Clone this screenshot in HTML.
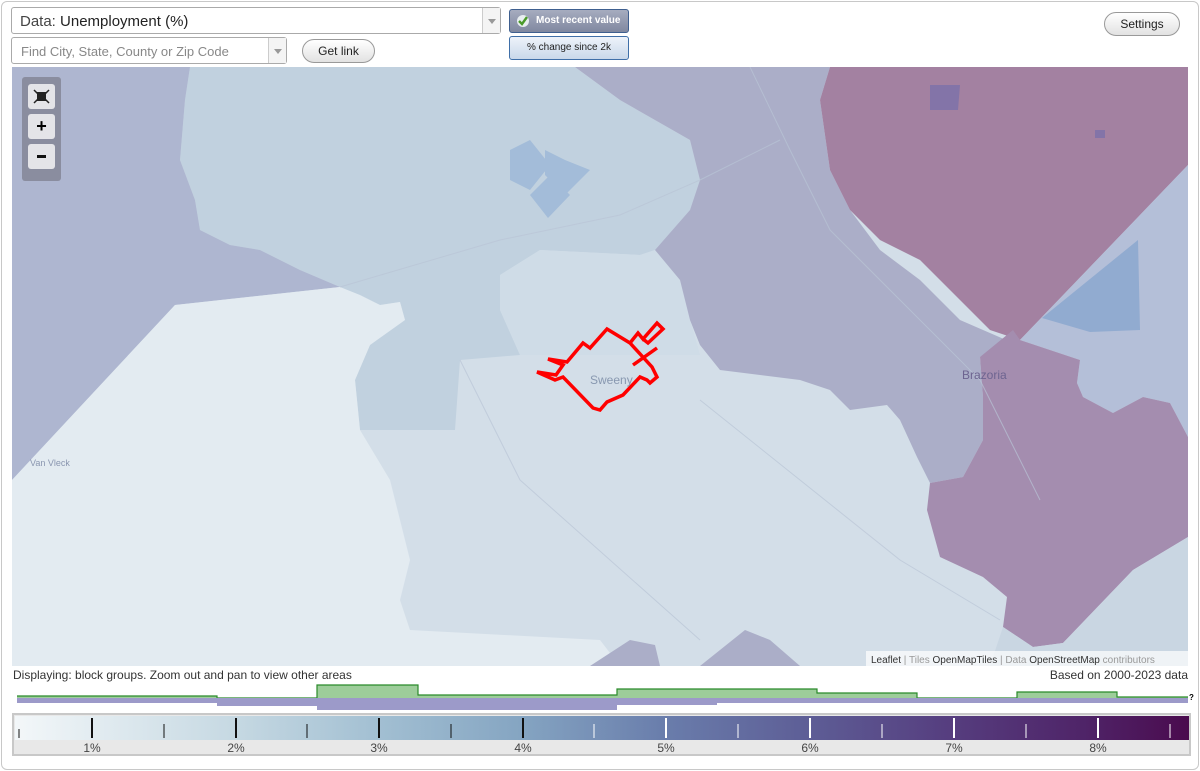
<!DOCTYPE html>
<html><head><meta charset="utf-8"><style>
*{box-sizing:border-box}
body{margin:0;width:1200px;height:771px;background:#fff;font-family:"Liberation Sans",sans-serif;position:relative;overflow:hidden}
.frame{position:absolute;left:1px;top:1px;width:1198px;height:769px;border:1px solid #c8c8c8;border-radius:6px}
.sel{position:absolute;background:#fff;border:1px solid #aaa;border-radius:3px;color:#444}
.arrow{position:absolute;right:0;top:0;bottom:0;width:18px;border-left:1px solid #ccc;background:#f4f4f4}
.arrow:after{content:"";position:absolute;left:5px;top:11px;border:4px solid transparent;border-top:5px solid #999}
.btn{position:absolute;border:1px solid #999;border-radius:12px;background:linear-gradient(#fff,#e2e2e2);font-size:12px;text-align:center;color:#222}
</style></head><body>
<div class="frame"></div>
<div class="sel" style="left:11px;top:7px;width:490px;height:27px;font-size:15px;padding:5px 8px">Data: <span style="color:#222">Unemployment (%)</span><div class="arrow" style="height:25px"></div></div>
<div class="sel" style="left:11px;top:37px;width:276px;height:27px;font-size:13px;padding:6px 9px;color:#888">Find City, State, County or Zip Code<div class="arrow" style="height:25px"></div></div>
<div class="btn" style="left:302px;top:39px;width:73px;height:24px;line-height:22px">Get link</div>
<div style="position:absolute;left:509px;top:9px;width:120px;height:24px;border:1px solid #3f5f8f;border-radius:3px;background:linear-gradient(#a6acbf,#8088a0);color:#fff;font-size:10px;font-weight:bold;line-height:22px;padding-left:26px">Most recent value
<svg style="position:absolute;left:6px;top:4px" width="14" height="14" viewBox="0 0 14 14"><circle cx="7" cy="7" r="6" fill="#e8eef0"/><path d="M3 7l3 3 5-7" stroke="#4a9a2a" stroke-width="2.4" fill="none"/></svg></div>
<div style="position:absolute;left:509px;top:36px;width:120px;height:24px;border:1px solid #3f6fa8;border-radius:3px;background:linear-gradient(#eef3fa,#c9d8ea);color:#222;font-size:10px;line-height:22px;text-align:center">% change since 2k</div>
<div class="btn" style="left:1104px;top:12px;width:76px;height:24px;line-height:22px">Settings</div>

<svg style="position:absolute;left:12px;top:67px" width="1176" height="599" viewBox="12 67 1176 599">
<rect x="12" y="67" width="1176" height="599" fill="#d3dee8"/>
<path d="M190 67L575 67 620 100 690 140 700 180 690 210 655 250 640 255 540 250 500 275 500 310 520 355 460 360 455 430 360 430 355 380 370 345 405 320 400 302 380 305 340 287 300 270 260 250 230 245 200 230 195 200 180 160 185 100Z" fill="#c1d1df"/>
<path d="M500 275L540 250 640 255 655 250 680 280 690 320 700 355 520 355 500 310Z" fill="#cfdce7"/>
<path d="M12 67L190 67 185 100 180 160 195 200 200 230 230 245 260 250 300 270 340 287 175 305 12 480Z" fill="#aeb6d0"/>
<path d="M175 305L340 287 360 295 380 305 400 302 405 320 370 345 355 380 360 430 390 480 400 520 410 560 400 600 410 630 600 640 620 666 12 666 12 480Z" fill="#e3ebf1"/>
<path d="M575 67L830 67 820 100 830 170 850 210 880 250 920 280 960 320 1013 343 980 357 983 397 983 440 963 477 930 483 917 457 900 420 887 405 850 410 830 390 800 380 720 370 700 345 690 320 680 280 655 250 690 210 700 180 690 140 620 100Z" fill="#abaec8"/>
<path d="M830 67L1188 67 1188 165 1020 340 990 330 960 300 920 260 880 240 850 210 830 170 820 100Z" fill="#a381a1"/>
<path d="M1188 165L1188 437 1170 403 1143 397 1113 413 1083 397 1077 383 1080 360 1020 340Z" fill="#b4bfd8"/>
<path d="M1042 318L1138 240 1140 330 1090 332Z" fill="#91abd0"/>
<path d="M1013 330L1020 340 1080 360 1077 383 1083 397 1113 413 1143 397 1170 403 1188 437 1188 537 1133 570 1063 643 1033 647 1003 627 1007 597 983 577 940 557 927 510 930 483 963 477 983 440 983 397 980 357Z" fill="#a48daf"/>
<path d="M1188 537L1188 666 990 666 1003 627 1033 647 1063 643 1133 570Z" fill="#c9d6e2"/>
<path d="M590 666L630 640 655 645 660 666Z" fill="#abaec8"/>
<path d="M700 666L745 630 770 640 800 666Z" fill="#abaec8"/>
<path d="M510 150L530 140 550 165 530 190 510 180Z M545 150L565 160 590 170 565 195 545 175Z M530 195L550 175 570 195 548 218Z" fill="#a3bcd9"/>
<path d="M930 85L960 85 958 110 930 110Z M1095 130L1105 130 1105 138 1095 138Z" fill="#8374a8"/>
<g fill="none" stroke="#b9c5d6" stroke-width="1" opacity=".7"><path d="M340 287L500 240 620 215 700 180 780 140"/><path d="M750 67L790 150 830 230 900 300 980 380 1040 500"/><path d="M460 360L520 480 700 640"/><path d="M700 400L900 560 1000 620"/></g>
<path d="M548 359L563 365 556 375 537 372 555 380 563 377 593 408 600 410 607 402 623 395 640 377 647 380 650 383 657 377 652 367 630 343 607 329 590 348 583 343 567 362 548 359Z M630 343L638 333 643 339 657 323 663 329 648 343 643 339 M633 365L657 348" fill="none" stroke="#f00" stroke-width="3.5" stroke-linejoin="miter"/>
<text x="590" y="384" font-size="12" fill="#8898b0" font-family="Liberation Sans,sans-serif">Sweeny</text>
<text x="962" y="379" font-size="12" fill="#6d6490" font-family="Liberation Sans,sans-serif">Brazoria</text>
<text x="30" y="466" font-size="9" fill="#8a96b0" font-family="Liberation Sans,sans-serif">Van Vleck</text>
<rect x="866" y="651" width="322" height="15" fill="rgba(255,255,255,.7)"/>
<text x="871" y="663" font-size="10" fill="#333" font-family="Liberation Sans,sans-serif"><tspan>Leaflet</tspan><tspan fill="#999"> | Tiles </tspan><tspan>OpenMapTiles</tspan><tspan fill="#999"> | Data </tspan><tspan>OpenStreetMap</tspan><tspan fill="#999"> contributors</tspan></text>
</svg>
<div style="position:absolute;left:22px;top:77px;width:39px;height:104px;background:#8a8d9f;border-radius:3px"></div>
<div style="position:absolute;left:28px;top:84px;width:27px;height:25px;background:#e4e4e8;border-radius:3px"><svg width="27" height="25"><rect x="9" y="8" width="9" height="9" fill="#222"/><path d="M6 6l4 4M21 6l-4 4M6 19l4-4M21 19l-4-4" stroke="#222" stroke-width="1.5"/></svg></div>
<div style="position:absolute;left:28px;top:114px;width:27px;height:25px;background:#e4e4e8;border-radius:3px;font:bold 18px 'Liberation Sans';text-align:center;line-height:25px">+</div>
<div style="position:absolute;left:28px;top:144px;width:27px;height:25px;background:#e4e4e8;border-radius:3px"><div style="position:absolute;left:9px;top:11px;width:9px;height:3px;background:#111"></div></div>

<div style="position:absolute;left:13px;top:668px;font-size:12px;color:#333">Displaying: block groups. Zoom out and pan to view other areas</div>
<div style="position:absolute;right:12px;top:668px;font-size:12px;color:#333">Based on 2000-2023 data</div>
<svg style="position:absolute;left:0;top:680px" width="1200" height="32">
<path d="M17 16H217V18H317V5H418V15H617V9H817V13H917V18H1017V12H1117V17H1188V22H17Z" fill="#9dcd9a"/>
<path d="M17 16H217V18H317V5H418V15H617V9H817V13H917V18H1017V12H1117V17H1188" fill="none" stroke="#2a8a2a" stroke-width="1.2"/>
<path d="M17 18H1188V23H917V23H717V25H617V30H317V26H217V23H17Z" fill="#9c9ac9"/>
<text x="1189" y="20" font-size="8" font-weight="bold" fill="#000">?</text>
</svg>
<div style="position:absolute;left:12px;top:713px;width:1179px;height:43px;border:2px solid #c8c8c8;background:#e8e8e8"></div>
<div style="position:absolute;left:15px;top:716px;width:1174px;height:24px;background:linear-gradient(90deg,#f3f7f9 0%,#c5d8e2 19%,#a2bfd2 31%,#85a5c2 43%,#6a7eac 55%,#5e5f97 67%,#563f80 79%,#4f2468 91%,#4a0b4e 100%)"></div>
<svg style="position:absolute;left:0;top:716px" width="1200" height="40">
<g stroke="#111" stroke-width="2"><path d="M92 2V22M236 2V22M379 2V22M523 2V22"/></g>
<g stroke="#111" stroke-width="1"><path d="M19 13V22M164 8V22M307 8V22M451 8V22"/></g>
<g stroke="#fff" stroke-width="2"><path d="M666 2V22M810 2V22M954 2V22M1098 2V22"/></g>
<g stroke="#fff" stroke-width="1"><path d="M594 8V22M738 8V22M882 8V22M1026 8V22M1170 8V22"/></g>
<g font-size="12" fill="#444" text-anchor="middle" font-family="Liberation Sans,sans-serif"><text x="92" y="36">1%</text><text x="236" y="36">2%</text><text x="379" y="36">3%</text><text x="523" y="36">4%</text><text x="666" y="36">5%</text><text x="810" y="36">6%</text><text x="954" y="36">7%</text><text x="1098" y="36">8%</text></g>
</svg>
</body></html>
